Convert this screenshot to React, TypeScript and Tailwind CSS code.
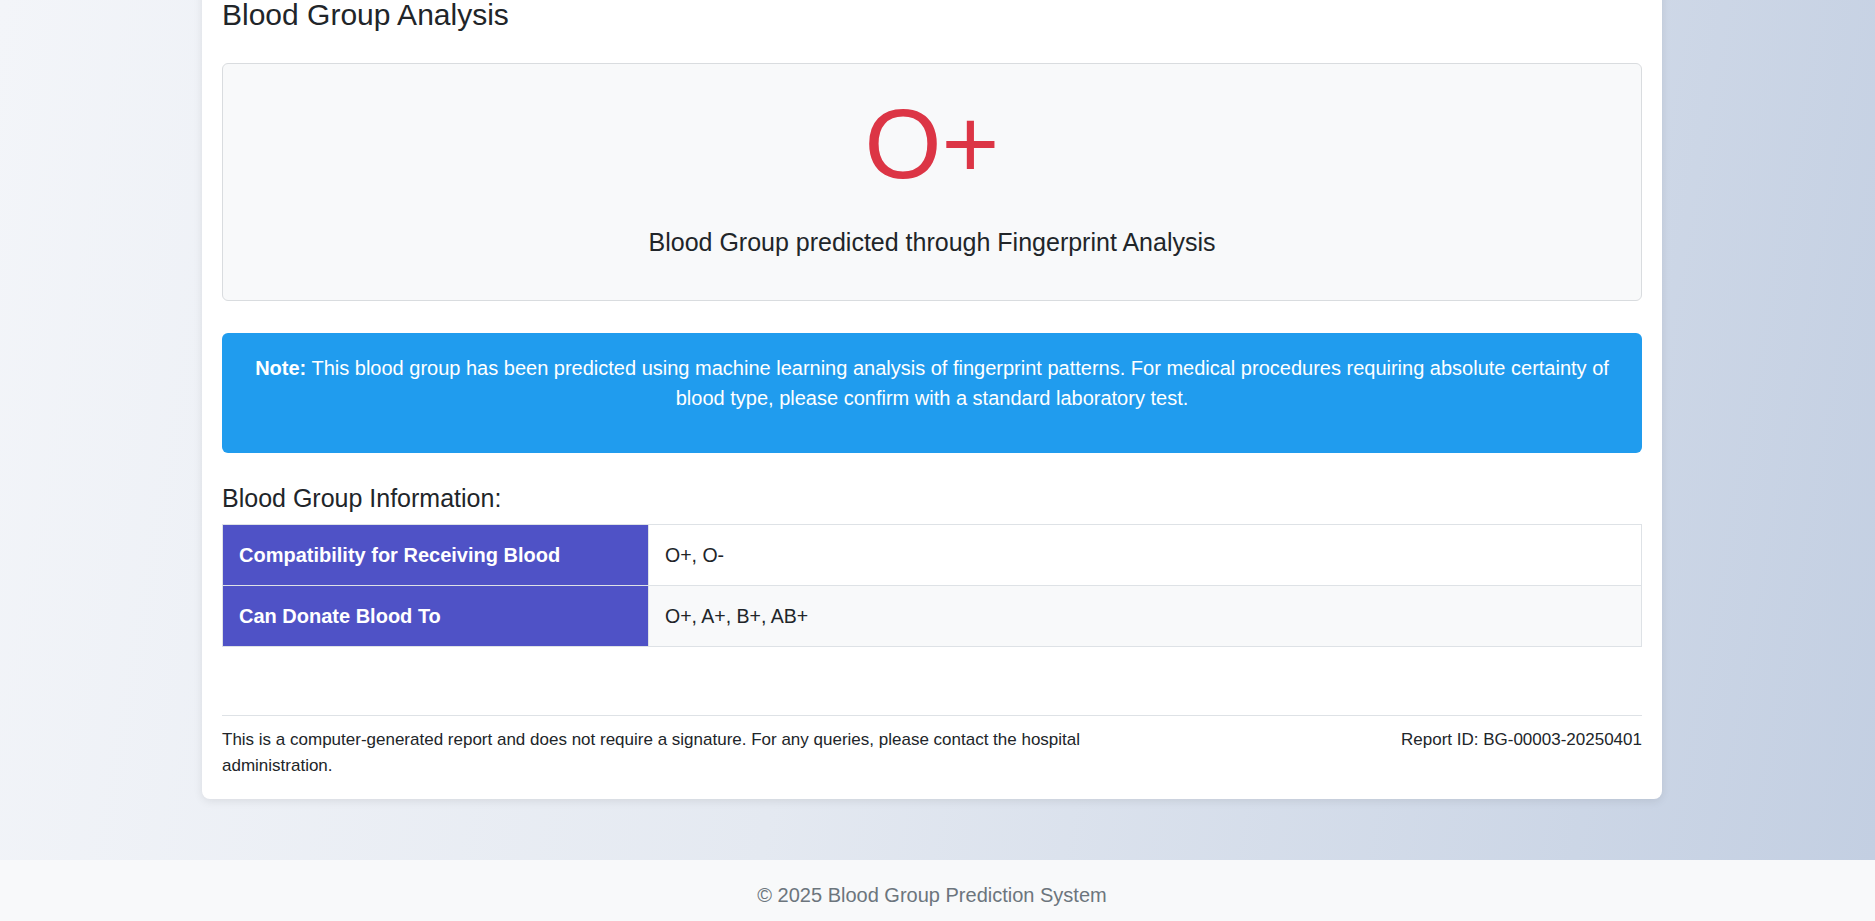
import React from 'react';

const rows = [
    { label: 'Compatibility for Receiving Blood', value: 'O+, O-' },
    { label: 'Can Donate Blood To', value: 'O+, A+, B+, AB+' },
];

export default function App() {
    return (
        <div className="min-h-[921px] flex flex-col overflow-hidden font-['Liberation_Sans',Arial,sans-serif] text-[#212529]">
            {/* Report area */}
            <main className="flex-1 bg-[linear-gradient(100deg,#f3f5f9_0%,#e4e9f1_45%,#c3cfe2_100%)] pr-[11px] pb-[61px]">
                <div className="mx-auto w-[1460px] -mt-[23px] bg-white rounded-lg shadow-[0_2px_10px_rgba(0,0,0,0.09)] px-5 pt-5 pb-5">
                    <h3 className="text-[30px] leading-[36px] font-normal mb-[30px]">Blood Group Analysis</h3>

                    <div className="rounded-md border border-[#d9dcdf] bg-[#f8f9fa] px-5 pt-5 pb-[39px] text-center">
                        <div className="text-[99px] leading-[120px] text-[#dc3545] mb-5">O+</div>
                        <p className="text-[25px] leading-[37px]">Blood Group predicted through Fingerprint Analysis</p>
                    </div>

                    <div className="mt-[32px] rounded-md bg-[#209cee] text-white text-center text-[20px] leading-[30px] px-[30px] pt-5 pb-10">
                        <strong className="font-bold">Note:</strong> This blood group has been predicted using machine learning analysis of fingerprint patterns. For medical procedures requiring absolute certainty of blood type, please confirm with a standard laboratory test.
                    </div>

                    <h4 className="mt-[30px] mb-[11px] text-[25px] leading-[30px] font-normal">Blood Group Information:</h4>

                    <table className="w-full border-collapse text-[19.5px] leading-[30px]">
                        <tbody>
                            {rows.map((row, i) => (
                                <tr key={row.label}>
                                    <th className="w-[426px] border border-[#dee2e6] bg-[#4f52c6] text-white text-[20px] font-bold text-left px-4 py-[15px]">
                                        {row.label}
                                    </th>
                                    <td className={`border border-[#dee2e6] px-4 py-[15px] ${i === 1 ? 'bg-[#f8f9fa]' : 'bg-white'}`}>
                                        {row.value}
                                    </td>
                                </tr>
                            ))}
                        </tbody>
                    </table>

                    <div className="mt-[68px] border-t border-[#dee2e6] pt-[11px] flex justify-between text-[17px] leading-[26px]">
                        <p className="w-[939px]">
                            This is a computer-generated report and does not require a signature. For any queries, please contact the hospital administration.
                        </p>
                        <p className="text-right">Report ID: BG-00003-20250401</p>
                    </div>
                </div>
            </main>

            {/* Page footer */}
            <footer className="h-[62px] bg-[#f8f9fa] border-b border-[#3a3a3a] pr-[11px] pt-2 flex items-center justify-center">
                <p className="text-[20px] text-[#6c757d]">© 2025 Blood Group Prediction System</p>
            </footer>
        </div>
    );
}
